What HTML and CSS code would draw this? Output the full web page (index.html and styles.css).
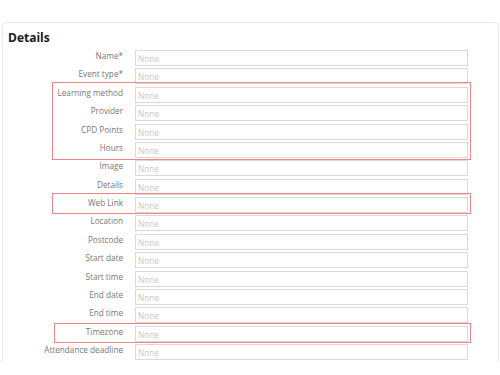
FILE: index.html
```html
<!DOCTYPE html>
<html>
<head>
<meta charset="utf-8">
<link rel="stylesheet" href="styles.css">
</head>
<body>
<div class="card">
  <h2 class="title">Details</h2>
  <div class="form">
    <div class="row"><div class="label">Name*</div><div class="field"><span>None</span></div></div>
    <div class="row"><div class="label">Event type*</div><div class="field"><span>None</span></div></div>
    <div class="group g1">
      <div class="row"><div class="label">Learning method</div><div class="field"><span>None</span></div></div>
      <div class="row"><div class="label">Provider</div><div class="field"><span>None</span></div></div>
      <div class="row"><div class="label">CPD Points</div><div class="field"><span>None</span></div></div>
      <div class="row"><div class="label">Hours</div><div class="field"><span>None</span></div></div>
    </div>
    <div class="row"><div class="label">Image</div><div class="field"><span>None</span></div></div>
    <div class="row"><div class="label">Details</div><div class="field"><span>None</span></div></div>
    <div class="group g2">
      <div class="row"><div class="label">Web Link</div><div class="field"><span>None</span></div></div>
    </div>
    <div class="row"><div class="label">Location</div><div class="field"><span>None</span></div></div>
    <div class="row"><div class="label">Postcode</div><div class="field"><span>None</span></div></div>
    <div class="row"><div class="label">Start date</div><div class="field"><span>None</span></div></div>
    <div class="row"><div class="label">Start time</div><div class="field"><span>None</span></div></div>
    <div class="row"><div class="label">End date</div><div class="field"><span>None</span></div></div>
    <div class="row"><div class="label">End time</div><div class="field"><span>None</span></div></div>
    <div class="group g3">
      <div class="row"><div class="label">Timezone</div><div class="field"><span>None</span></div></div>
    </div>
    <div class="row"><div class="label">Attendance deadline</div><div class="field"><span>None</span></div></div>
  </div>
</div>
</body>
</html>
```

FILE: styles.css
```css
html, body {
  margin: 0;
  padding: 0;
  background: #ffffff;
  font-family: "Open Sans", "Liberation Sans", sans-serif;
}
body {
  padding-top: 22px;
  padding-left: 2px;
  height: 375px;
  box-sizing: border-box;
  overflow: hidden;
}
.card {
  width: 497px;
  height: 340px;
  box-sizing: border-box;
  border: 1px solid #e8e8e8;
  border-bottom: none;
  border-radius: 5px 5px 0 0;
  background: #ffffff;
}
.title {
  margin: 0;
  padding: 7px 0 0 5px;
  height: 27px;
  box-sizing: border-box;
  font-size: 12px;
  font-weight: 700;
  color: #1a1a1a;
  line-height: 16px;
}
.form {
  display: flex;
  flex-direction: column;
  gap: 2.375px;
}
.group {
  display: flex;
  flex-direction: column;
  gap: 2.375px;
  position: relative;
}
.group::after {
  content: "";
  position: absolute;
  border: 1px solid #ef8589;
  pointer-events: none;
}
.g1::after { top: -5px; bottom: -2px; left: 49px; right: 27px; }
.g2::after { top: -4px; bottom: -1px; left: 49px; right: 27px; }
.g3::after { top: -3px; bottom: -1px; left: 51px; right: 27px; }
.row {
  display: flex;
  align-items: flex-start;
  gap: 12px;
  height: 16px;
}
.label {
  width: 120px;
  flex: none;
  text-align: right;
  font-size: 8.2px;
  line-height: 12px;
  color: #777777;
  white-space: nowrap;
}
.field {
  width: 333px;
  height: 16px;
  box-sizing: border-box;
  border: 1px solid #d9d9d9;
  padding: 0 2px;
  font-size: 8.3px;
  color: #c8c8c8;
}
.field span {
  display: block;
  line-height: 15px;
}
```
